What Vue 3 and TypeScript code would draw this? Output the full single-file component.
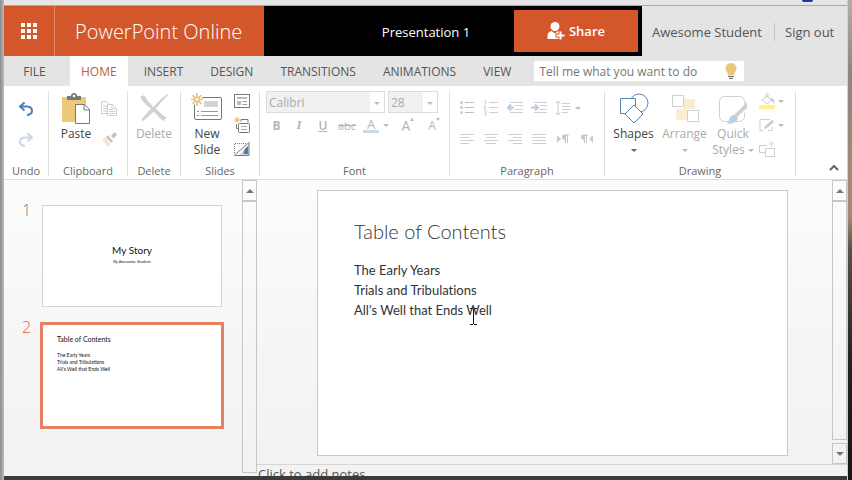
<script setup lang="ts">
import { ref } from 'vue'

interface Tab {
  name: string
  kind?: 'file' | 'active'
}

const tabs: Tab[] = [
  { name: 'FILE', kind: 'file' },
  { name: 'HOME', kind: 'active' },
  { name: 'INSERT' },
  { name: 'DESIGN' },
  { name: 'TRANSITIONS' },
  { name: 'ANIMATIONS' },
  { name: 'VIEW' },
]

const query = ref('')
const contents: string[] = ['The Early Years', 'Trials and Tribulations', "All's Well that Ends Well"]
</script>

<template>
  <div class="desktop">
    <div class="browser-edge"><span class="edge-icon"></span></div>
    <div class="window">
      <header class="topbar">
        <button class="waffle" aria-label="App launcher">
          <svg width="16" height="16" viewBox="0 0 16 16" fill="#fff">
            <path d="M0 0h4v4H0zM6 0h4v4H6zM12 0h4v4h-4zM0 6h4v4H0zM6 6h4v4H6zM12 6h4v4h-4zM0 12h4v4H0zM6 12h4v4H6zM12 12h4v4h-4z" />
          </svg>
        </button>
        <a class="brand" href="#">PowerPoint Online</a>
        <div class="docbar">
          <h1 class="doc-title">Presentation 1</h1>
          <button class="share">
            <svg width="18" height="18" viewBox="0 0 18 18">
              <circle cx="8" cy="4.500" r="4.500" fill="#fff" />
              <path d="M.5 17v-3q0-4 4-5l3.500 2.500L11 9q2 .4 2.500 2v6z" fill="#fff" />
              <path d="M13.500 8v10M8.500 13.500H18" stroke="#d4572b" stroke-width="4" />
              <path d="M13.500 9.500v8M9.500 13.500h8" stroke="#fff" stroke-width="2" />
            </svg>
            Share
          </button>
        </div>
        <nav class="account">
          <a class="user" href="#">Awesome Student</a>
          <a class="signout" href="#">Sign out</a>
        </nav>
      </header>

      <nav class="tabs">
        <button v-for="tab in tabs" :key="tab.name" class="tab" :class="tab.kind">{{ tab.name }}</button>
        <div class="tell-me">
          <input v-model="query" type="text" placeholder="Tell me what you want to do" aria-label="Tell me what you want to do" />
          <svg width="12" height="16" viewBox="0 0 12 16">
            <path d="M6 0a5.500 5.500 0 0 0-5.500 5.500c0 3 2.500 4 2.500 7h6c0-3 2.500-4 2.500-7A5.500 5.500 0 0 0 6 0z" fill="#e8c87c" />
            <path d="M3 13.500h6M4 15.300h4" stroke="#777" stroke-width="1.200" />
          </svg>
        </div>
      </nav>

      <section class="ribbon">
        <div class="group undo-group">
          <div class="stack">
            <button class="icon" aria-label="Undo">
              <svg width="16" height="16" viewBox="0 0 16 16" fill="none" stroke="#4d80b8" stroke-width="2">
                <path d="M6.500 1.500L2 5.500l4.500 4M2.500 5.500H9q5 .2 5 4.300 0 3.700-5 4.200" />
              </svg>
            </button>
            <button class="icon" disabled aria-label="Redo">
              <svg width="16" height="16" viewBox="0 0 16 16" fill="none" stroke="#c9d8e8" stroke-width="2">
                <path d="M9.500 1.500L14 5.500l-4.500 4M13.500 5.500H7q-5 .2-5 4.300 0 3.700 5 4.200" />
              </svg>
            </button>
          </div>
          <span class="caption">Undo</span>
        </div>

        <div class="group clip-group">
          <button class="big">
            <svg width="30" height="32" viewBox="0 0 30 32">
              <path d="M1 4h24v25H1z" fill="#edc878" />
              <path d="M6 7V3h4q0-3 3-3t3 3h4v4z" fill="#777" /><circle cx="13" cy="3" r="1.300" fill="#fff" />
              <path d="M14.500 11.500h9l5 5v14h-14z" fill="#fff" stroke="#777" />
              <path d="M23 11.500v5.500h5.500" fill="none" stroke="#777" />
            </svg>
            <span>Paste</span>
          </button>
          <div class="stack">
            <button class="icon" disabled aria-label="Copy">
              <svg width="16" height="16" viewBox="0 0 16 16" fill="#fff" stroke="#cdcdcd">
                <path d="M.5.5h5l3 3v9h-8zM2 5h4M2 7.500h4M2 10h4" />
                <path d="M6.500 3.500h5l4 4v7h-9zM11 3.500V8h4M8 8.500h3M8 10.500h6M8 12.500h6" />
              </svg>
            </button>
            <button class="icon" disabled aria-label="Format painter">
              <svg width="16" height="16" viewBox="0 0 16 16">
                <path d="M1 8l3-2.500L9.500 12 7 15z" fill="#f8e2d0" />
                <path d="M4.500 5L7 3.500 12 9l-1.500 2zM10 4l3.500-4L16 2.500 12.500 6.500z" fill="#c4c4c4" />
              </svg>
            </button>
          </div>
          <span class="caption">Clipboard</span>
        </div>

        <div class="group delete-group">
          <button class="big" disabled>
            <svg width="30" height="32" viewBox="0 0 30 32" fill="#d2d2d2">
              <path d="M1 4l4-2q4 7 9.500 12Q20 7 28 1l1 1Q22 9 17 15.500q5 6 11 9.500l-4 3q-5-4-9-9.500Q9 24 4 28l-2-1Q7 21 12 15.500 5 11 1 4z" />
            </svg>
            <span>Delete</span>
          </button>
          <span class="caption">Delete</span>
        </div>

        <div class="group slides-group">
          <button class="big">
            <svg width="32" height="32" viewBox="0 0 32 32">
              <rect x="3.500" y="4.500" width="27" height="22" rx="1.500" fill="#fff" stroke="#777" />
              <path d="M13 8h14v6H13z" fill="#d4d4d4" />
              <path d="M10 18.500h17M10 22.500h17M6 18.500h2M6 22.500h2" stroke="#999" />
              <circle cx="6" cy="6.500" r="5.500" fill="#fff" />
              <path d="M6 0v13M0 6.500h12M1.700 2.200l8.600 8.600M10.300 2.200l-8.600 8.600" stroke="#e5b965" stroke-width="1.500" />
              <circle cx="6" cy="6.500" r="2" fill="#fff" stroke="#e5b965" />
            </svg>
            <span>New<br />Slide</span>
          </button>
          <div class="stack tight">
            <button class="icon" aria-label="Layout">
              <svg width="16" height="16" viewBox="0 0 16 16">
                <rect x=".5" y="1.500" width="15" height="13" fill="#fff" stroke="#777" />
                <path d="M3 4h10v2H3zM3 8h4v4H3z" fill="#bbb" /><path d="M8.500 8.500H13M8.500 11.500H13" stroke="#999" />
              </svg>
            </button>
            <button class="icon" aria-label="Duplicate slide">
              <svg width="16" height="16" viewBox="0 0 16 16" fill="#fff" stroke="#777">
                <path d="M7 4.500V2.500h7v3M2.500 7v4.500h2" />
                <rect x="4.500" y="6.500" width="11" height="9" rx="1" /><path d="M7 9.500h6M7 12.500h6" stroke="#aaa" />
                <path d="M3 0v6M0 3h6M1 1l4 4M5 1L1 5" stroke="#e5b965" />
              </svg>
            </button>
            <button class="icon" aria-label="Hide slide">
              <svg width="16" height="16" viewBox="0 0 16 16">
                <path d="M1 2.500h12" stroke="#777" stroke-dasharray="1 1" /><path d="M.5 3v9" stroke="#777" stroke-dasharray="1 1" />
                <path d="M15 4v10H5z" fill="#d9d9d9" /><path d="M14 5v8h-4.500q0-5 4.500-8" fill="#457eb0" />
                <path d="M0 14.500L15 1.500v13H1" fill="none" stroke="#777" />
              </svg>
            </button>
          </div>
          <span class="caption">Slides</span>
        </div>

        <div class="group font-group">
          <div class="selects">
            <label class="picker family">
              <select disabled aria-label="Font"><option>Calibri</option></select>
              <i class="arrow"></i>
            </label>
            <label class="picker size">
              <select disabled aria-label="Font size"><option>28</option></select>
              <i class="arrow"></i>
            </label>
          </div>
          <div class="row formats">
            <button disabled class="b">B</button>
            <button disabled class="i">I</button>
            <button disabled class="u">U</button>
            <button disabled class="s">abc</button>
            <button disabled class="color"><span>A</span><i class="arrow"></i></button>
            <button disabled class="grow">A<i class="up"></i></button>
            <button disabled class="grow small">A<i class="arrow"></i></button>
          </div>
          <span class="caption">Font</span>
        </div>

        <div class="group para-group">
          <div class="row">
            <button disabled aria-label="Bullets"><svg width="16" height="16" viewBox="0 0 16 16" stroke="#bdbdbd" fill="#c3ccd6"><path d="M6 2.500h9M6 7.500h9M6 12.500h9" /><g stroke="none"><circle cx="2.500" cy="2.500" r="1.500" /><circle cx="2.500" cy="7.500" r="1.500" /><circle cx="2.500" cy="12.500" r="1.500" /></g></svg></button>
            <button disabled aria-label="Numbering"><svg width="16" height="16" viewBox="0 0 16 16" fill="none" stroke="#cfcfcf"><path d="M6 2.500h9M6 7.500h9M6 12.500h9M1 1h1.500v3.500M1 6h2L1 9h2.500M1 11h2v4H1M1.500 13H3" /></svg></button>
            <button disabled aria-label="Decrease indent"><svg width="16" height="16" viewBox="0 0 16 16" fill="none" stroke="#cfcfcf"><path d="M3 2.500h13M8 5.500h8M8 9.500h8M3 12.500h13" /><path d="M7 7.500H1M4 4.500l-3 3 3 3" stroke="#b9cce0" stroke-width="2" /></svg></button>
            <button disabled aria-label="Increase indent"><svg width="16" height="16" viewBox="0 0 16 16" fill="none" stroke="#cfcfcf"><path d="M3 2.500h13M9 5.500h7M9 9.500h7M3 12.500h13" /><path d="M0 7.500h6M4 4.500l3 3-3 3" stroke="#b9cce0" stroke-width="2" /></svg></button>
            <button disabled class="spacing" aria-label="Line spacing"><svg width="16" height="16" viewBox="0 0 16 16" fill="none" stroke="#cfcfcf"><path d="M7 3.500h8M7 6.500h8M7 9.500h8M7 12.500h6" /><path d="M3 1v14M.5 3.500L3 1l2.500 2.500M.5 12.500L3 15l2.500-2.500" stroke="#bccbdc" /></svg><i class="arrow"></i></button>
          </div>
          <div class="row">
            <button disabled aria-label="Align left"><svg width="16" height="12" viewBox="0 0 16 12" stroke="#cfcfcf"><path d="M1 1.500h14M1 4.500h9M1 7.500h14M1 10.500h9" /></svg></button>
            <button disabled aria-label="Center"><svg width="16" height="12" viewBox="0 0 16 12" stroke="#cfcfcf"><path d="M1 1.500h14M3 4.500h10M1 7.500h14M3 10.500h10" /></svg></button>
            <button disabled aria-label="Align right"><svg width="16" height="12" viewBox="0 0 16 12" stroke="#cfcfcf"><path d="M1 1.500h14M6 4.500h9M1 7.500h14M6 10.500h9" /></svg></button>
            <button disabled aria-label="Justify"><svg width="16" height="12" viewBox="0 0 16 12" stroke="#cfcfcf"><path d="M1 1.500h14M1 4.500h14M1 7.500h14M1 10.500h14" /></svg></button>
            <button disabled aria-label="Left to right"><svg width="16" height="12" viewBox="0 0 16 12"><path d="M2 2l4 4-4 4z" fill="#bfd0e2" /><path d="M9.500 6.500a2.500 2.500 0 0 1 0-5h4V3h-.5v7h-1V3h-1v7h-1z" fill="#c6c6c6" /></svg></button>
            <button disabled aria-label="Right to left"><svg width="16" height="12" viewBox="0 0 16 12"><path d="M14 2l-4 4 4 4z" fill="#bfd0e2" /><path d="M4.500 6.500a2.500 2.500 0 0 1 0-5h4V3H8v7H7V3H6v7H5z" fill="#c6c6c6" /></svg></button>
          </div>
          <span class="caption">Paragraph</span>
        </div>

        <div class="group draw-group">
          <button class="big">
            <svg width="30" height="32" viewBox="0 0 30 32" fill="#fff" stroke="#5583b3">
              <circle cx="20" cy="10" r="9" /><path d="M1.500 5.500h15v15h-15z" /><path d="M15 12l9 9-9 9-9-9z" />
            </svg>
            <span>Shapes</span><i class="arrow dark"></i>
          </button>
          <button class="big" disabled>
            <svg width="30" height="32" viewBox="0 0 30 32">
              <path d="M14 6h11v10H14zM6 16h11v11H6z" fill="#faecd0" />
              <path d="M2.500 2.500h11v11h-11zM17.500 17.500h11v11h-11z" fill="#fff" stroke="#cfcfcf" />
            </svg>
            <span>Arrange</span><i class="arrow"></i>
          </button>
          <button class="big quick" disabled>
            <svg width="30" height="32" viewBox="0 0 30 32">
              <rect x="1.500" y="3.500" width="25" height="25" rx="5" fill="#fff" stroke="#cfcfcf" />
              <path d="M29 9v8l-9 10-5-3z" fill="#fff" /><path d="M29 9v6L19 24l-3-2z" fill="#d0d0d0" />
              <path d="M15 22q5 0 5 4-2 5-12 5 3-1 3-4 1-4 4-5z" fill="#bccfe1" />
            </svg>
            <span>Quick<br />Styles <i class="arrow"></i></span>
          </button>
          <div class="stack tight">
            <button class="icon" disabled aria-label="Shape fill">
              <svg width="16" height="16" viewBox="0 0 16 16"><path d="M0 12h16v4H0z" fill="#fcf48a" /><path d="M3 7l5-4 5 4-5 4zM7 5V1h2v3" fill="#fff" stroke="#cfcfcf" /><path d="M12 5q4 0 3 6-2-4-4-4z" fill="#bccfe1" /></svg><i class="arrow"></i>
            </button>
            <button class="icon" disabled aria-label="Shape outline">
              <svg width="16" height="16" viewBox="0 0 16 16"><path d="M11 2.500H1v11h3M9 13.500h4V10" fill="none" stroke="#cfcfcf" /><path d="M5 12l1-3 7-6 2 2-7 6z" fill="#bccfe1" /></svg><i class="arrow"></i>
            </button>
            <button class="icon" disabled aria-label="Duplicate shape">
              <svg width="16" height="16" viewBox="0 0 16 16" fill="none" stroke="#cfcfcf"><path d="M8 4.500H.5v7H6M6.500 7.500h9v8h-9z" /><path d="M12.500 0v6M9.500 3h6M10.500 1l4 4M14.500 1l-4 4" stroke="#f8e3b8" /></svg>
            </button>
          </div>
          <span class="caption">Drawing</span>
        </div>

        <button class="collapse" aria-label="Collapse the ribbon">
          <svg width="10" height="7" viewBox="0 0 10 7" fill="none" stroke="#666" stroke-width="2"><path d="M1 6l4-4 4 4" /></svg>
        </button>
      </section>

      <main class="workspace">
        <aside class="thumbs">
          <div class="thumb-row">
            <span class="num">1</span>
            <button class="thumb cover">
              <span class="t-title">My Story</span>
              <span class="t-line">By Awesome Student</span>
            </button>
          </div>
          <div class="thumb-row selected">
            <span class="num">2</span>
            <button class="thumb list">
              <span class="t-title">Table of Contents</span>
              <span v-for="line in contents" :key="line" class="t-line">{{ line }}</span>
            </button>
          </div>
        </aside>
        <div class="scroll">
          <button class="step" aria-label="Scroll slides up"><i class="up"></i></button>
          <div class="track"></div>
        </div>
        <div class="editor">
          <div class="canvas">
            <article class="slide">
              <h2>Table of Contents</h2>
              <p v-for="line in contents" :key="line">{{ line }}</p>
              <svg class="ibeam" width="9" height="17" viewBox="0 0 9 17" fill="none" stroke="#111"><path d="M1 .5h3M5 .5h3M4.500 1v15M1 16.500h3M5 16.500h3" /></svg>
            </article>
            <div class="scroll">
              <button class="step" aria-label="Scroll up"><i class="up"></i></button>
              <div class="track"></div>
              <button class="step" aria-label="Scroll down"><i class="arrow"></i></button>
            </div>
          </div>
          <div class="notes">Click to add notes</div>
        </div>
      </main>
    </div>
  </div>
</template>

<style>
body {
  margin: 0;
  overflow: hidden;
}
</style>

<style scoped>
* {
  box-sizing: border-box;
}
.desktop {
  height: 100vh;
  display: flex;
  flex-direction: column;
  padding: 0 5px 4px 4px;
  background:
    linear-gradient(90deg, #8b8b8b, #b9bcbb) 0 0 / 4px 100% no-repeat,
    linear-gradient(90deg, #d0d0d0 1px, transparent 1px) 100% 0 / 5px 100% no-repeat,
    linear-gradient(#b0aeac, #8d867f 15%, #a58b72 45%, #55504a 52%, #222 75%, #161616) 100% 0 / 5px 100% no-repeat,
    #3d3b3a;
  font-family: 'Open Sans', 'Noto Sans', sans-serif;
  font-size: 12px;
  color: #555;
}
button {
  border: 0;
  padding: 0;
  margin: 0;
  background: none;
  font: inherit;
  color: inherit;
}
a {
  color: inherit;
  text-decoration: none;
}
svg {
  display: block;
  flex: none;
}
.browser-edge {
  height: 6px;
  flex: none;
  background: #e6e6e6;
  border-bottom: 1px solid #aaa;
  display: flex;
  justify-content: flex-end;
  padding-right: 34px;
}
.edge-icon {
  width: 11px;
  height: 2px;
  border-radius: 0 0 4px 4px;
  background: #1c3c94;
}
.window {
  flex: 1;
  min-height: 0;
  display: flex;
  flex-direction: column;
  background: #fff;
}
.topbar {
  display: flex;
  height: 50px;
  flex: none;
  background: #e4e4e4;
}
.waffle {
  width: 51px;
  display: grid;
  place-items: center;
  background: #d4572b;
  border-right: 1px solid #e48a68;
}
.brand {
  width: 209px;
  padding-left: 20px;
  line-height: 52px;
  font-size: 20px;
  font-weight: 300;
  color: #fff;
  background: #d4572b;
  white-space: nowrap;
}
.docbar {
  flex: 1;
  display: flex;
  background: #000;
  padding: 4px;
}
.doc-title {
  flex: 1;
  margin: 0;
  padding-left: 70px;
  text-align: center;
  font-size: 13px;
  font-weight: 400;
  line-height: 44px;
  color: #fff;
}
.share {
  width: 124px;
  display: flex;
  align-items: center;
  justify-content: center;
  gap: 4px;
  background: #d4572b;
  color: #fff;
  font-size: 13px;
  font-weight: 600;
}
.account {
  width: 205px;
  display: flex;
  align-items: center;
  padding-left: 10px;
  font-size: 13px;
  line-height: 18px;
  padding-top: 2px;
  white-space: nowrap;
}
.user {
  width: 123px;
  border-right: 1px solid #c4c4c4;
}
.signout {
  padding-left: 10px;
}
.tabs {
  display: flex;
  height: 30px;
  flex: none;
  background: #e4e4e4;
}
.tab {
  padding: 0 14px 0 13px;
  font-size: 12px;
}
.tab.file {
  width: 66px;
  padding-right: 18px;
}
.tab.active {
  background: #fff;
  color: #b8604a;
  padding: 0 11px;
  margin-right: 3px;
}
.tell-me {
  display: flex;
  align-items: center;
  width: 210px;
  height: 20px;
  margin: 5px 0 0 9px;
  padding-right: 7px;
  background: #fff;
}
.tell-me input {
  flex: 1;
  min-width: 0;
  border: 0;
  outline: 0;
  padding: 0 0 0 5px;
  background: none;
  font: inherit;
}
.tell-me input::placeholder {
  color: #777;
}
.ribbon {
  display: flex;
  height: 94px;
  flex: none;
  padding-top: 5px;
  border-bottom: 1px solid #dedede;
  align-items: flex-start;
}
.group {
  height: 85px;
  display: flex;
  flex-wrap: wrap;
  align-content: flex-start;
  position: relative;
  border-right: 1px solid #dedede;
}
.caption {
  position: absolute;
  left: 0;
  bottom: -3px;
  width: 100%;
  text-align: center;
  font-size: 11px;
  line-height: 16px;
  color: #666;
}
.undo-group { width: 45px; justify-content: center; }
.clip-group { width: 79px; padding-left: 6px; gap: 4px; }
.delete-group { width: 53px; justify-content: center; }
.slides-group { width: 79px; padding-left: 5px; gap: 6px; }
.font-group { width: 190px; padding-left: 6px; }
.para-group { width: 155px; padding: 5px 0 0 5px; }
.draw-group { width: 191px; padding-left: 3px; }
.big {
  width: 42px;
  display: flex;
  flex-direction: column;
  align-items: center;
  line-height: 16px;
  padding-top: 2px;
  color: #444;
}
.big span {
  margin-top: 1px;
}
.big:disabled {
  color: #aaa;
}
.draw-group .big {
  width: 51px;
}
.draw-group .quick {
  width: 46px;
}
.big > .arrow {
  margin-top: 7px;
}
.stack {
  display: flex;
  flex-direction: column;
  gap: 15px;
  padding-top: 10px;
}
.stack.tight {
  gap: 8px;
  padding-top: 2px;
}
.draw-group .stack {
  padding-left: 3px;
}
.icon {
  display: flex;
  align-items: center;
  gap: 3px;
  height: 16px;
}
.arrow,
.up {
  display: inline-block;
  width: 0;
  height: 0;
  border: 3px solid transparent;
  border-top-color: #bbb;
  border-bottom: 0;
}
.up {
  border-top: 0;
  border-bottom: 3px solid #bbb;
}
.quick .arrow {
  vertical-align: middle;
}
.arrow.dark {
  border-top-color: #666;
}
.selects {
  display: flex;
  gap: 3px;
}
.picker {
  position: relative;
  display: flex;
  border: 1px solid #dcdcdc;
  height: 22px;
  background: linear-gradient(90deg, transparent calc(100% - 14px), #fff 0) #f1f1f1;
}
.picker .arrow {
  position: absolute;
  right: 4px;
  top: 10px;
}
.picker select {
  width: 100%;
  border: 0;
  appearance: none;
  background: none;
  font: inherit;
  color: #aaa;
  opacity: 1;
  padding: 0 2px;
}
.family { width: 119px; }
.size { width: 50px; }
.row {
  display: flex;
  width: 100%;
}
.row button {
  width: 24px;
  height: 24px;
  display: flex;
  align-items: center;
  justify-content: center;
  color: #b5b5b5;
}
.para-group .row {
  height: 31px;
}
.row .spacing {
  width: 34px;
  gap: 4px;
}
.formats .b { width: 21px; font-weight: 700; }
.row .i { font-family: 'Liberation Serif', serif; font-style: italic; font-weight: 700; font-size: 13px; }
.row .u { text-decoration: underline; font-weight: 600; }
.row .s { text-decoration: line-through; font-size: 11px; }
.row .color {
  width: 34px;
  gap: 4px;
}
.color span {
  width: 16px;
  height: 16px;
  line-height: 14px;
  font-size: 13px;
  border-bottom: 3px solid #ccd8e6;
}
.row .grow {
  width: 26px;
  font-size: 14px;
  margin-left: 2px;
}
.row .small {
  font-size: 12px;
  margin-left: 0;
}
.grow i {
  align-self: flex-start;
  margin-top: 5px;
  border-left-width: 2px;
  border-right-width: 2px;
}
.collapse {
  margin: 73px 8px 0 auto;
}
.workspace {
  flex: 1;
  min-height: 0;
  display: flex;
  background: linear-gradient(#fbfdfc, #f6f6f6 50%, #f2f2f2);
}
.thumbs {
  width: 238px;
  display: flex;
  flex-direction: column;
  gap: 15px;
  padding: 25px 18px 0 18px;
}
.thumb-row {
  display: flex;
  gap: 11px;
}
.num {
  width: 7px;
  font-size: 16px;
  line-height: 10px;
  font-weight: 300;
  color: #777;
}
.selected .num {
  color: #e2604c;
}
.thumb {
  flex: 1;
  height: 102px;
  margin: 0 2px;
  display: flex;
  flex-direction: column;
  border: 1px solid #d4d4d4;
  background: #fff;
  font-family: Lato, 'Noto Sans', sans-serif;
  color: #111;
  text-align: left;
}
.thumb.cover {
  align-items: center;
  justify-content: center;
  padding-bottom: 5px;
}
.cover .t-title {
  font-size: 10px;
  line-height: 16px;
}
.t-line {
  font-size: 4px;
  line-height: 7px;
}
.thumb.list {
  height: 107px;
  margin: 0;
  border: 3px solid #e68264;
  padding: 9px 14px;
  justify-content: flex-start;
}
.list .t-title {
  font-size: 7px;
  line-height: 10px;
  margin-bottom: 8px;
}
.list .t-line {
  font-size: 5px;
}
.scroll {
  width: 15px;
  flex: none;
  display: flex;
  flex-direction: column;
}
.step {
  height: 21px;
  border: 1px solid #c6c6c6;
  display: grid;
  place-items: center;
}
.step i {
  border-left-width: 4px;
  border-right-width: 4px;
  border-top-color: #777;
  border-bottom-color: #777;
}
.step .up {
  border-bottom-width: 4px;
}
.step .arrow {
  border-top-width: 4px;
}
.track {
  flex: 1;
  border: 1px solid #c6c6c6;
  margin-bottom: 3px;
}
.editor {
  flex: 1;
  min-width: 0;
  display: flex;
  flex-direction: column;
}
.canvas {
  flex: 1;
  min-height: 0;
  display: flex;
}
.slide {
  position: relative;
  flex: 1;
  margin: 10px 44px 8px 60px;
  padding: 28px 36px;
  border: 1px solid #c9c9c9;
  background: #fff;
  font-family: Lato, 'Noto Sans', sans-serif;
  font-variant-ligatures: none;
  color: #333;
}
.slide h2 {
  margin: 0 0 17px;
  font-size: 20px;
  line-height: 24px;
  font-weight: 300;
}
.slide p {
  margin: 0;
  font-size: 13px;
  line-height: 20px;
}
.ibeam {
  position: absolute;
  left: 151px;
  top: 117px;
}
.notes {
  height: 12px;
  flex: none;
  overflow: hidden;
  border-top: 1px solid #d5d5d5;
  padding-left: 1px;
  font-size: 13px;
  line-height: 18px;
}
</style>
